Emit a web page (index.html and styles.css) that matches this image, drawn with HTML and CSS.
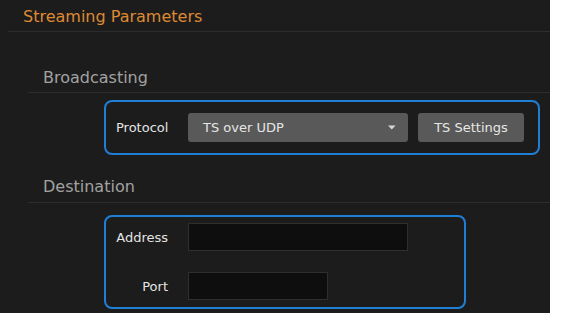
FILE: index.html
```html
<!DOCTYPE html>
<html lang="en">
<head>
    <meta charset="UTF-8">
    <title>Streaming Parameters</title>
    <link rel="stylesheet" href="styles.css">
</head>
<body>
    <div class="panel">
        <div class="panel-head">Streaming Parameters</div>

        <!-- Broadcasting -->
        <div class="section">
            <div class="section-head">Broadcasting</div>
            <div class="group group-wide">
                <div class="field">
                    <label class="field-label">Protocol</label>
                    <div class="controls">
                        <div class="select">
                            <span>TS over UDP</span>
                            <svg class="caret" width="8" height="5" viewBox="0 0 8 5"><path d="M0 0.5h7.5L3.75 4.5z" fill="#d8d8d8"/></svg>
                        </div>
                        <button class="btn">TS Settings</button>
                    </div>
                </div>
            </div>
        </div>

        <!-- Destination -->
        <div class="section">
            <div class="section-head section-head-tight">Destination</div>
            <div class="group group-narrow">
                <div class="field">
                    <label class="field-label">Address</label>
                    <input class="input input-long" type="text">
                </div>
                <div class="field">
                    <label class="field-label">Port</label>
                    <input class="input input-short" type="text">
                </div>
            </div>
        </div>
    </div>
</body>
</html>
```

FILE: styles.css
```css
body {
    margin: 0;
    background: #fff;
    font-family: "DejaVu Sans", Verdana, sans-serif;
}
.panel {
    width: 550px;
    height: 313px;
    background: #1c1c1c;
    overflow: hidden;
}
.panel-head {
    margin-left: 8px;
    padding: 7px 0 5px 15px;
    font-size: 16px;
    line-height: 19px;
    color: #df8a33;
    border-bottom: 1px solid #2d2d2d;
}
.section {
    margin-left: 28px;
}
.section-head {
    padding: 36px 0 5px 15px;
    font-size: 16px;
    line-height: 19px;
    color: #a2a2a2;
    border-bottom: 1px solid #2d2d2d;
}
.section-head-tight {
    padding-top: 22px;
    padding-bottom: 6px;
}
.group {
    margin-left: 76px;
    border: 2px solid #1f7fd5;
    border-radius: 8px;
    display: flex;
    flex-direction: column;
    gap: 21px;
}
.group-wide {
    width: 409px;
    margin-top: 7px;
    padding: 11px 13px 11px 10px;
}
.group-narrow {
    width: 348px;
    margin-top: 12px;
    padding: 6px 0 7px 10px;
}
.field {
    display: flex;
    align-items: center;
    gap: 20px;
}
.field-label {
    width: 52px;
    text-align: right;
    font-size: 13px;
    color: #e4e4e4;
}
.controls {
    display: flex;
    gap: 10px;
}
.select {
    width: 220px;
    height: 29px;
    box-sizing: border-box;
    padding: 0 12px 0 15px;
    display: flex;
    align-items: center;
    justify-content: space-between;
    background: #595959;
    border-radius: 3px;
    font-size: 13px;
    color: #e6e6e6;
}
.caret {
    display: block;
}
.btn {
    width: 106px;
    height: 29px;
    padding: 0;
    background: #595959;
    border: none;
    border-radius: 3px;
    font-family: inherit;
    font-size: 13px;
    color: #e6e6e6;
}
.input {
    height: 28px;
    box-sizing: border-box;
    background: #0e0e0e;
    border: 1px solid #2f2f2f;
    margin: 0;
}
.input-long {
    width: 220px;
}
.input-short {
    width: 140px;
}
```
